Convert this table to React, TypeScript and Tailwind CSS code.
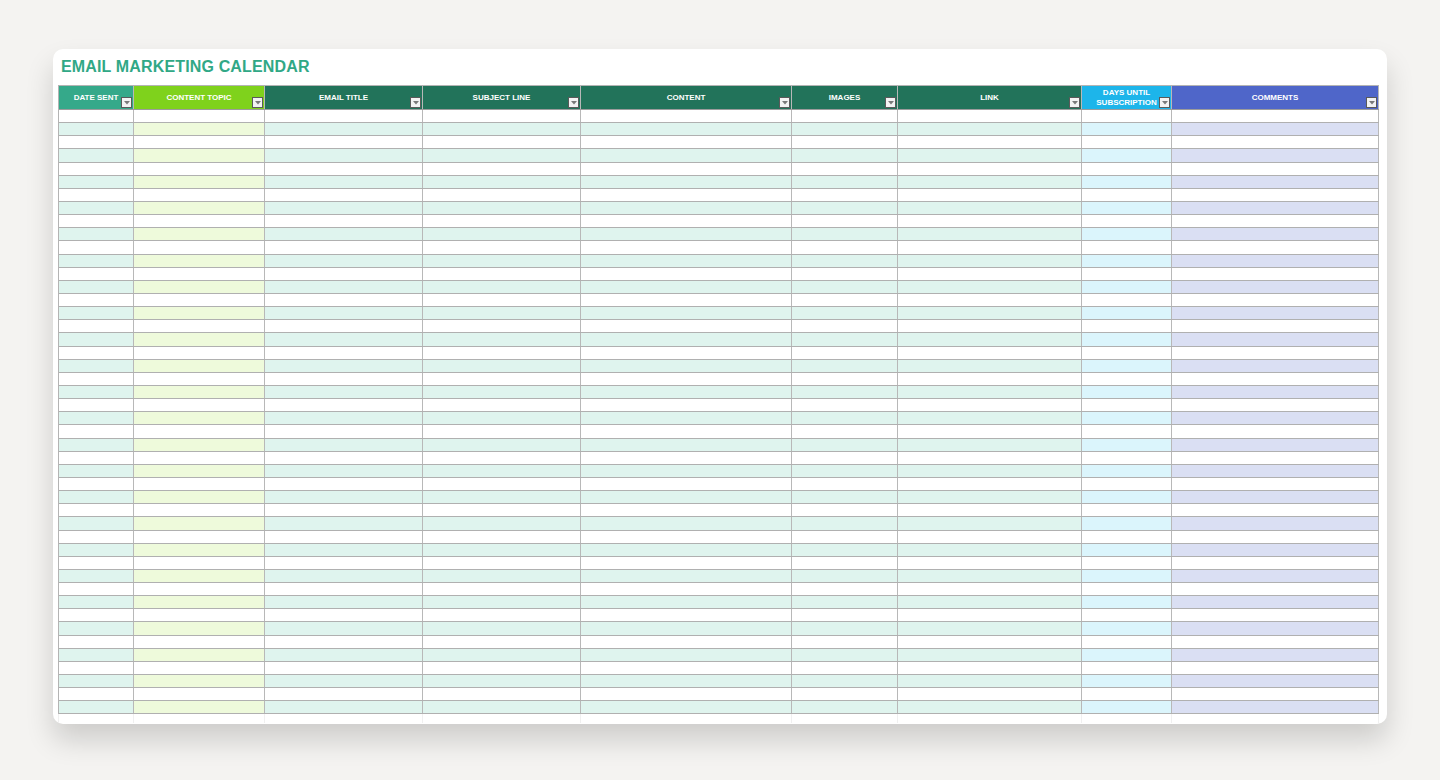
import React from 'react';

type Col = {
  label: string[];
  width: string;
  head: string;
  tint: string;
};

const cols: Col[] = [
  { label: ['DATE SENT'], width: 'w-[75px]', head: 'bg-[#35a98a]', tint: 'bg-[#dff4ee]' },
  { label: ['CONTENT TOPIC'], width: 'w-[131px]', head: 'bg-[#7fd21c]', tint: 'bg-[#eefadb]' },
  { label: ['EMAIL TITLE'], width: 'w-[158px]', head: 'bg-[#22735a]', tint: 'bg-[#dff4ee]' },
  { label: ['SUBJECT LINE'], width: 'w-[158px]', head: 'bg-[#22735a]', tint: 'bg-[#dff4ee]' },
  { label: ['CONTENT'], width: 'w-[211px]', head: 'bg-[#22735a]', tint: 'bg-[#dff4ee]' },
  { label: ['IMAGES'], width: 'w-[106px]', head: 'bg-[#22735a]', tint: 'bg-[#dff4ee]' },
  { label: ['LINK'], width: 'w-[184px]', head: 'bg-[#22735a]', tint: 'bg-[#dff4ee]' },
  { label: ['DAYS UNTIL', 'SUBSCRIPTION'], width: 'w-[90px]', head: 'bg-[#1db5ea]', tint: 'bg-[#dbf5fc]' },
  { label: ['COMMENTS'], width: 'w-[207px]', head: 'bg-[#4f66c9]', tint: 'bg-[#dadff3]' },
];

const rows = Array.from({ length: 46 }, (_, i) => i);

function FilterButton() {
  return (
    <div className="absolute right-[1px] bottom-[1px] w-[11px] h-[11px] bg-[#f3f3f3] border border-[#5a5a5a] flex items-center justify-center">
      <svg width="6" height="4" viewBox="0 0 6 4">
        <path d="M0 0h6L3 3.5z" fill="#7a7a7a" />
      </svg>
    </div>
  );
}

export default function App() {
  return (
    <div
      className="min-h-screen h-[780px] bg-[#f4f3f1] pt-[49px] pl-[53px]"
      style={{ fontFamily: '"Liberation Sans", Arial, sans-serif' }}
    >
      <div className="w-[1334px] h-[675px] bg-white rounded-[10px] shadow-[0_16px_28px_rgba(0,0,0,0.16)] pl-[5px] pr-[8px] pt-[8px] flex flex-col">
        <h1 className="pl-[3px] text-[16px] leading-[20px] font-bold text-[#31a886] tracking-[0.15px]">
          EMAIL MARKETING CALENDAR
        </h1>

        {/* sheet */}
        <div className="mt-[8px] w-[1321px] flex flex-col border-t border-l border-[#b4b4b4]">
          <div className="flex h-[24px] border-b border-[#9c9c9c]">
            {cols.map((c, i) => (
              <div
                key={i}
                className={`${c.width} ${c.head} relative shrink-0 border-r border-[#b8b8b8] flex flex-col items-center justify-center text-white font-bold text-[8px] leading-[10px]`}
              >
                {c.label.map((l) => (
                  <span key={l}>{l}</span>
                ))}
                <FilterButton />
              </div>
            ))}
          </div>

          {rows.map((r) => (
            <div key={r} className="flex h-[13.15px] border-b border-[#b0b0b0]">
              {cols.map((c, i) => (
                <div
                  key={i}
                  className={`${c.width} shrink-0 border-r border-[#b8b8b8] ${r % 2 === 1 ? c.tint : 'bg-white'}`}
                />
              ))}
            </div>
          ))}

          <div className="flex h-[9px] -ml-[1px] border-l border-[#f0f0f0]">
            {cols.map((c, i) => (
              <div key={i} className={`${c.width} shrink-0 border-r border-[#f0f0f0]`} />
            ))}
          </div>
        </div>
      </div>
    </div>
  );
}
